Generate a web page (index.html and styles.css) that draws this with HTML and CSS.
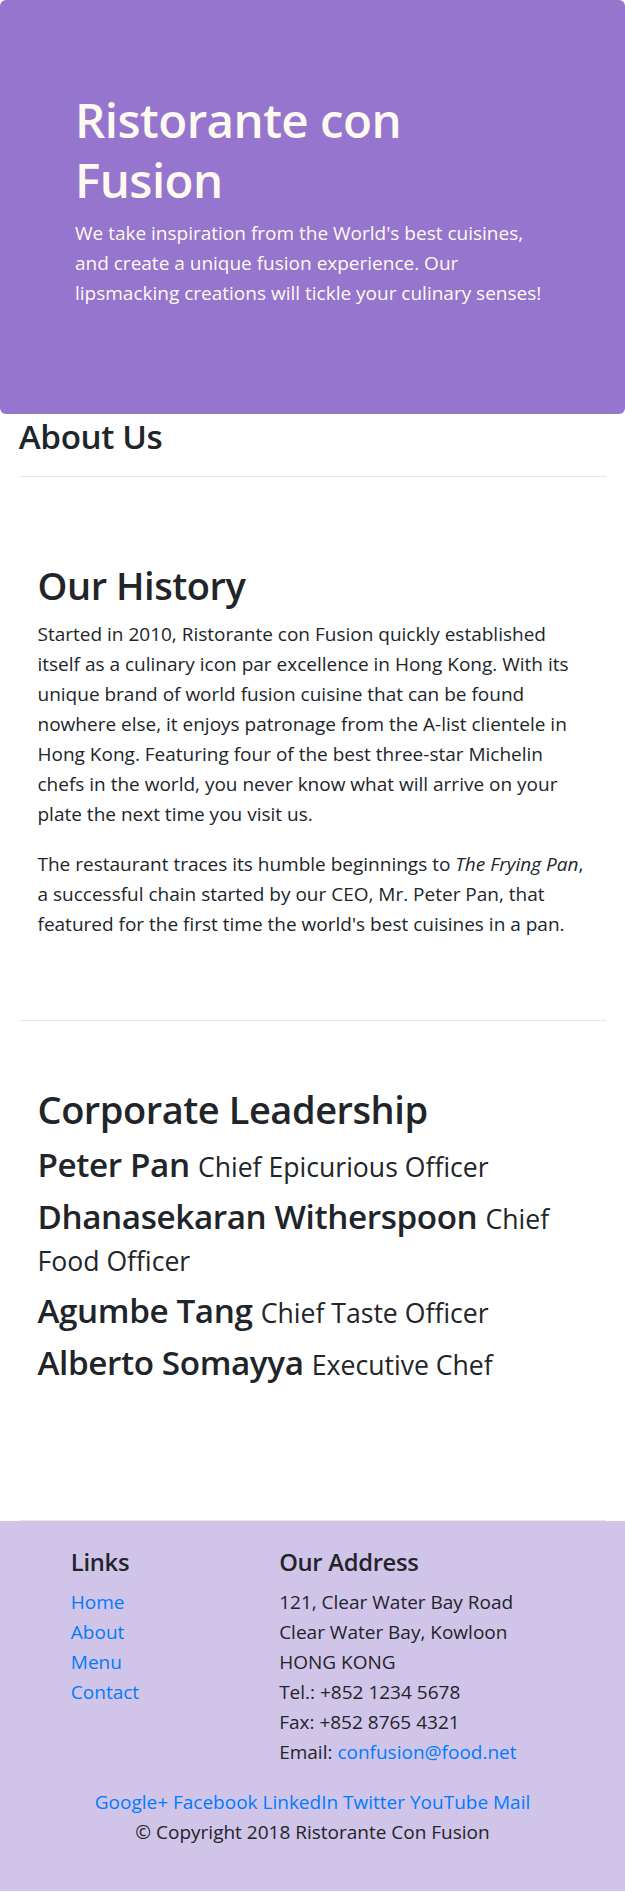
FILE: index.html
```html
<!DOCTYPE html>
<html lang="en">
<head>
<meta charset="utf-8">
<title>Ristorante con Fusion: About Us</title>
<link rel="stylesheet" href="styles.css">
</head>
<body>
<header class="jumbotron">
  <div class="hero">
    <h1>Ristorante con Fusion</h1>
    <p>We take inspiration from the World's best cuisines, and create a unique fusion experience. Our lipsmacking creations will tickle your culinary senses!</p>
  </div>
</header>

<main class="container">
  <div class="page-title">
    <h3 class="about-title">About Us</h3>
    <hr class="rule">
  </div>

  <section class="row-content">
    <div class="col">
      <h2>Our History</h2>
      <p>Started in 2010, Ristorante con Fusion quickly established itself as a culinary icon par excellence in Hong Kong. With its unique brand of world fusion cuisine that can be found nowhere else, it enjoys patronage from the A-list clientele in Hong Kong. Featuring four of the best three-star Michelin chefs in the world, you never know what will arrive on your plate the next time you visit us.</p>
      <p>The restaurant traces its humble beginnings to <em>The Frying Pan</em>, a successful chain started by our CEO, Mr. Peter Pan, that featured for the first time the world's best cuisines in a pan.</p>
    </div>
  </section>

  <section class="row-content">
    <div class="col">
      <h2>Corporate Leadership</h2>
      <h3 class="leader">Peter Pan <small>Chief Epicurious Officer</small></h3>
      <h3 class="leader">Dhanasekaran Witherspoon <small>Chief Food Officer</small></h3>
      <h3 class="leader">Agumbe Tang <small>Chief Taste Officer</small></h3>
      <h3 class="leader">Alberto Somayya <small>Executive Chef</small></h3>
    </div>
  </section>
</main>

<footer class="footer">
  <div class="footer-row">
    <div class="col-links">
      <h5>Links</h5>
      <ul class="link-list">
        <li><a href="#">Home</a></li>
        <li><a href="#">About</a></li>
        <li><a href="#">Menu</a></li>
        <li><a href="#">Contact</a></li>
      </ul>
    </div>
    <div class="col-address">
      <h5>Our Address</h5>
      <address>
        121, Clear Water Bay Road<br>
        Clear Water Bay, Kowloon<br>
        HONG KONG<br>
        Tel.: +852 1234 5678<br>
        Fax: +852 8765 4321<br>
        Email: <a href="#">confusion@food.net</a>
      </address>
    </div>
    <div class="col-social">
      <a href="#">Google+</a> <a href="#">Facebook</a> <a href="#">LinkedIn</a> <a href="#">Twitter</a> <a href="#">YouTube</a> <a href="#">Mail</a>
    </div>
  </div>
  <div class="copyright">
    <p>© Copyright 2018 Ristorante Con Fusion</p>
  </div>
</footer>
</body>
</html>
```

FILE: styles.css
```css
* {
  box-sizing: border-box;
}

html, body {
  margin: 0;
  padding: 0;
}

body {
  font-family: "Open Sans", "Noto Sans", "Liberation Sans", sans-serif;
  font-size: 19px;
  line-height: 30px;
  color: #212529;
  background: #ffffff;
}

a {
  color: #007bff;
  text-decoration: none;
}

p {
  margin: 0 0 20px;
}

h1, h2, h3, h5 {
  margin: 0 0 10px;
  font-weight: 600;
  letter-spacing: -0.012em;
}

/* Header */
.jumbotron {
  background: #9575CD;
  color: #FFFAF0;
  padding: 89.5px 37.5px 85.5px;
  border-radius: 6px;
}

.hero {
  padding: 0 37.5px;
}

.hero h1 {
  font-size: 47.5px;
  line-height: 60px;
  margin-bottom: 8.5px;
}

/* Main content */
.container {
  padding: 0 18.75px;
}

.about-title {
  font-size: 33.25px;
  line-height: 42px;
  margin: 0;
  padding-top: 1.5px;
}

.rule {
  margin: 18.5px 0 20px;
  border: 0;
  border-top: 1px solid rgba(0, 0, 0, 0.1);
}

.row-content {
  padding: 64.5px 0 60.5px;
  border-bottom: 1px solid #e8e8e8;
  min-height: 500px;
}

.col {
  padding: 0 18.75px;
}

.col h2 {
  font-size: 38px;
  line-height: 48px;
}

.leader {
  font-size: 33.25px;
  line-height: 42px;
}

.leader small {
  font-size: 80%;
  font-weight: 400;
  line-height: 1.2;
  letter-spacing: 0;
}

/* Footer */
.footer {
  background: #D1C4E9;
  padding: 26px 0 24px;
}

.footer-row {
  display: flex;
  flex-wrap: wrap;
}

.col-links {
  margin-left: 8.3333%;
  width: 33.3333%;
  padding: 0 18.75px;
}

.col-address {
  width: 58.3333%;
  padding: 0 18.75px;
}

.col-social {
  width: 100%;
  padding: 0 18.75px;
  text-align: center;
}

.footer h5 {
  font-size: 23.75px;
  line-height: 30px;
}

.link-list {
  list-style: none;
  margin: 0 0 20px;
  padding: 0;
}

address {
  font-style: normal;
  margin: 0 0 20px;
}

.copyright {
  display: flex;
  justify-content: center;
}
```
